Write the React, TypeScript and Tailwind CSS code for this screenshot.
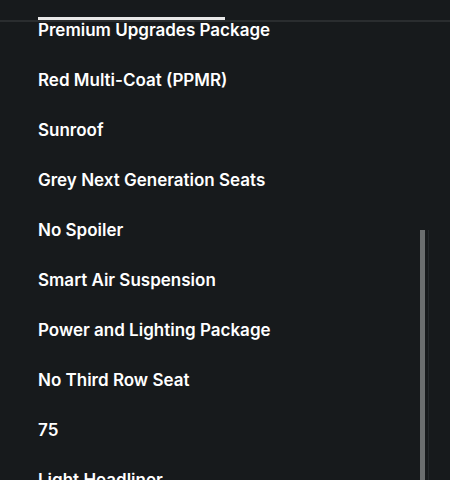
import React from "react";

const options = [
  "Premium Upgrades Package",
  "Red Multi-Coat (PPMR)",
  "Sunroof",
  "Grey Next Generation Seats",
  "No Spoiler",
  "Smart Air Suspension",
  "Power and Lighting Package",
  "No Third Row Seat",
  "75",
  "Light Headliner",
];

function App() {
  return (
    <div
      className="relative h-[480px] w-[450px] overflow-hidden bg-[#171a1c] text-white"
      style={{ fontFamily: "Inter, 'Noto Sans', sans-serif" }}
    >
      <div className="relative h-[22px] border-b-2 border-[#2a2d2f]">
        <div className="absolute left-[38px] top-[17px] h-[3px] w-[187px] bg-[#e8e8e8]" />
      </div>

      <ul className="mt-[-2px] flex flex-col">
        {options.map((o) => (
          <li key={o} className="h-[50px] px-[38px]">
            <span className="block text-[17px] font-semibold leading-[20px]">{o}</span>
          </li>
        ))}
      </ul>

      {/* scroll thumb */}
      <div className="absolute left-[420px] top-[230px] h-[250px] w-[5px] bg-[#6b6e6f]" />
      <div className="absolute left-[428px] top-[230px] h-[250px] w-[1px] bg-[#23272a]" />
    </div>
  );
}

export default App;
